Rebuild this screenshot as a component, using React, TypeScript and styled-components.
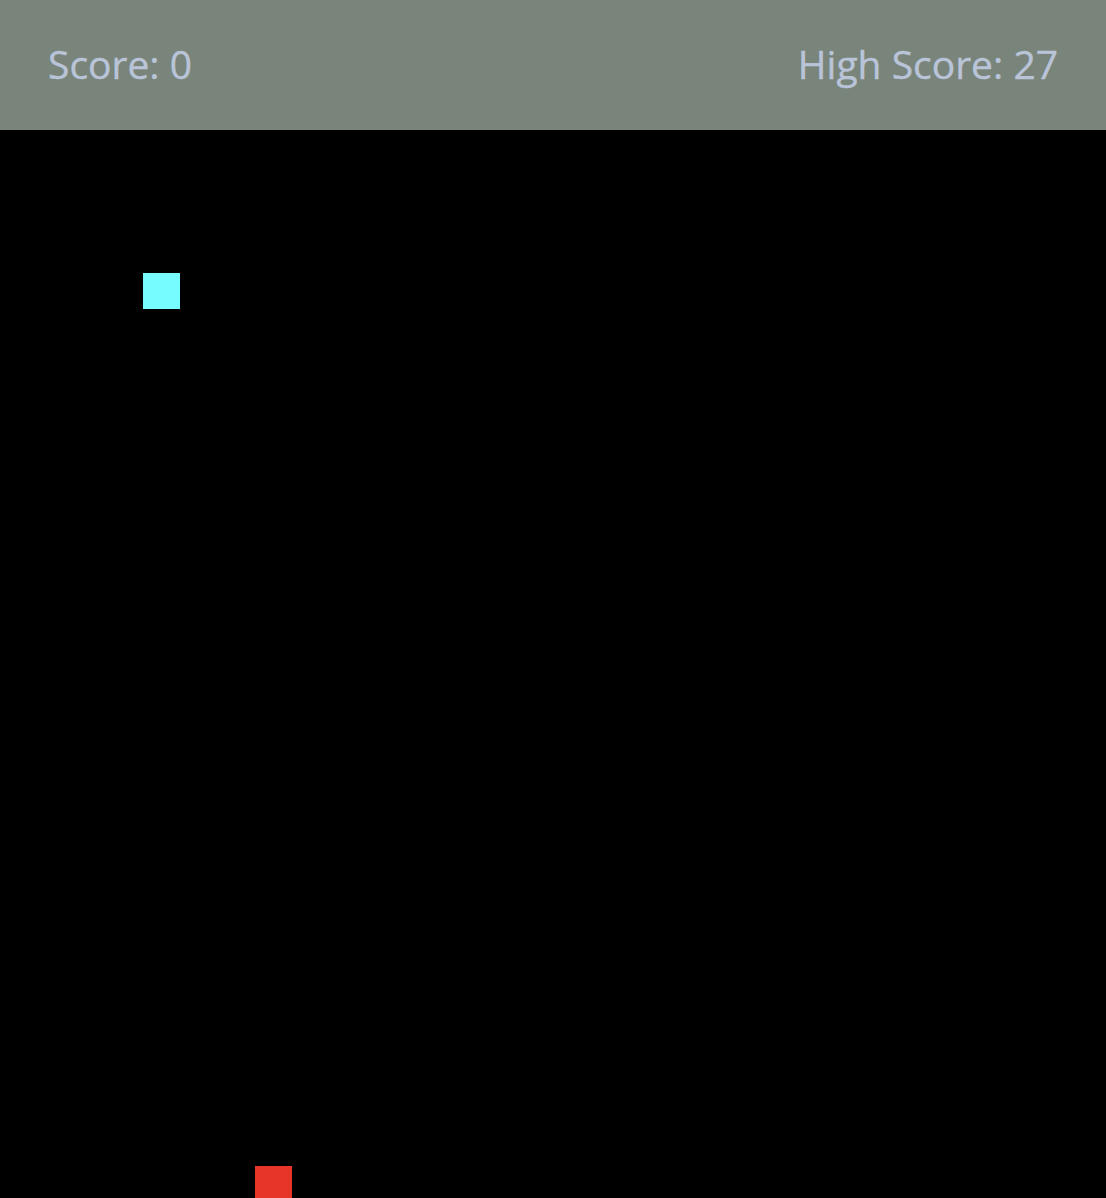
import React from "react";
import styled, { createGlobalStyle } from "styled-components";

const Global = createGlobalStyle`
  html, body { margin: 0; padding: 0; background: #000; overflow: hidden; }
  body { font-family: "Open Sans", "Noto Sans", sans-serif; }
`;

const Page = styled.div`
  display: flex;
  flex-direction: column;
  width: 1106px;
  height: 1198px;
`;

const Header = styled.header`
  display: flex;
  align-items: center;
  justify-content: space-between;
  height: 130px;
  padding: 0 48px 4px 48px;
  box-sizing: border-box;
  background: #79847a;
  flex-shrink: 0;
`;

const ScoreText = styled.div`
  color: #b9c4d9;
  font-size: 39px;
  font-weight: 400;
  line-height: 1;
  -webkit-text-stroke: 0.4px #b9c4d9;
`;

const Board = styled.main`
  position: relative;
  flex: 1;
  background: #000;
  overflow: hidden;
`;

const Cell = styled.div<{ $color: string }>`
  position: absolute;
  width: 37px;
  height: 36px;
  background: ${(p) => p.$color};
`;

export default function App() {
  return (
    <>
      <Global />
      <Page>
        <Header>
          <ScoreText>Score: 0</ScoreText>
          <ScoreText>High Score: 27</ScoreText>
        </Header>
        <Board>
          <Cell $color="#76fbfe" style={{ left: 143, top: 143 }} />
          <Cell $color="#e8352a" style={{ left: 255, top: 1036 }} />
        </Board>
      </Page>
    </>
  );
}
